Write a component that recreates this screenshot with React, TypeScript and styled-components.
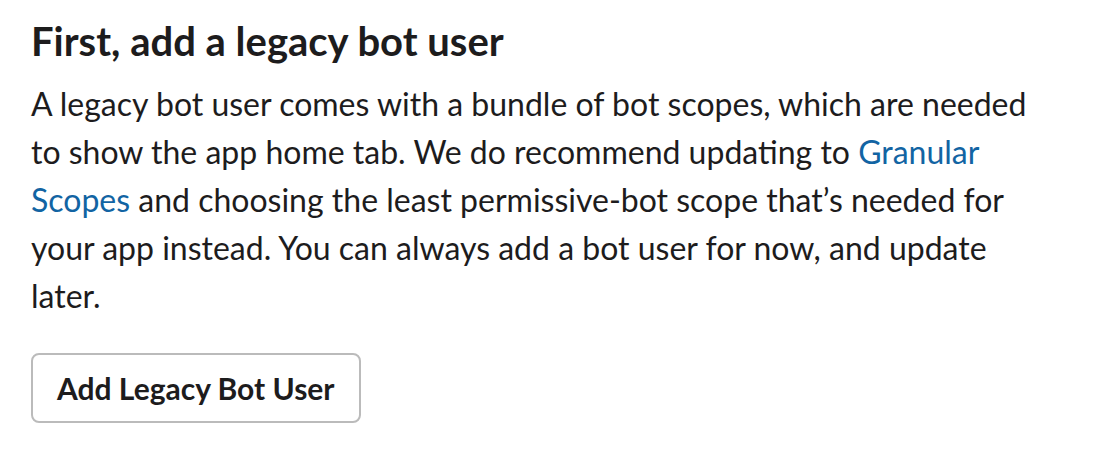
import styled, { createGlobalStyle } from "styled-components";

const GlobalStyle = createGlobalStyle`
  html, body {
    margin: 0;
    padding: 0;
    background: #fff;
  }
  body {
    font-family: Lato, "Noto Sans", sans-serif;
    color: #1d1c1d;
  }
`;

const Section = styled.section`
  padding: 16px 31px 0;
  width: 1000px;
`;

const Title = styled.h3`
  margin: 0;
  font-size: 40px;
  font-weight: 700;
  line-height: 50px;
  color: #1d1c1d;
`;

const Body = styled.p`
  margin: 14px 0 0;
  font-size: 32px;
  line-height: 48px;
  color: #1d1c1d;
`;

const Link = styled.a`
  color: #1264a3;
  text-decoration: none;
`;

const Button = styled.button`
  margin-top: 33px;
  height: 70px;
  padding: 0 24px;
  border: 2px solid #bbbbbb;
  border-radius: 8px;
  background: #fff;
  font-family: inherit;
  font-size: 30px;
  font-weight: 700;
  color: #1d1c1d;
  cursor: pointer;
`;

export default function App() {
  return (
    <>
      <GlobalStyle />
      <Section>
        <Title>First, add a legacy bot user</Title>
        <Body>
          A legacy bot user comes with a bundle of bot scopes, which are needed
          to show the app home tab. We do recommend updating to{" "}
          <Link href="#">Granular Scopes</Link> and choosing the least
          permissive-bot scope that’s needed for your app instead. You can
          always add a bot user for now, and update later.
        </Body>
        <Button>Add Legacy Bot User</Button>
      </Section>
    </>
  );
}
